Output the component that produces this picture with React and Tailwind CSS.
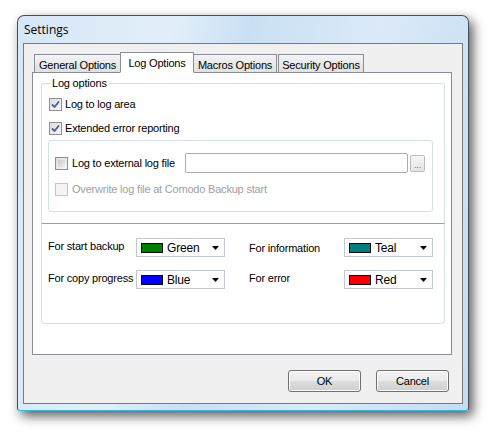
import React from 'react';

const font = { fontFamily: '"Liberation Sans", Arial, sans-serif' };

const Check = ({ checked, disabled }) => (
    <div className={`w-[13px] h-[13px] border flex items-center justify-center shrink-0 ${disabled ? 'border-[#c5c5c5] bg-[#f4f4f4]' : 'border-[#8e8f8f] bg-gradient-to-br from-[#dcdcdc] to-[#f8f8f8]'}`}>
        {checked && (
            <svg width="9" height="9" viewBox="0 0 9 9">
                <path d="M1 4.5 L3.5 7 L8 1.5" fill="none" stroke="#4a5b9a" strokeWidth="1.8" />
            </svg>
        )}
        {!checked && !disabled && <div className="w-[7px] h-[7px] bg-gradient-to-br from-[#cbcbcb] to-[#eeeeee]" />}
    </div>
);

const ColorCombo = ({ color, label }) => (
    <div className="w-[89px] h-[19px] border border-[#c3c8cc] bg-white flex items-center pl-[4px] pr-[5px]">
        <div className="w-[22px] h-[10px] border border-black" style={{ backgroundColor: color }} />
        <span className="ml-[4px] text-[12px] leading-[14px] text-black flex-1">{label}</span>
        <svg width="7" height="4" viewBox="0 0 7 4"><path d="M0 0 H7 L3.5 4 Z" fill="#000" /></svg>
    </div>
);

const Tab = ({ label, active, width }) => (
    <div
        className={`border border-[#898c95] flex justify-center text-black text-[11px] leading-[14px] whitespace-nowrap ${active ? 'h-[21px] bg-white border-b-white pt-[3px] -mx-[1px] z-10 relative' : 'h-[19px] mt-[2px] bg-gradient-to-b from-[#f3f3f3] to-[#e1e1e1] pt-[3px]'}`}
        style={{ width }}
    >
        {label}
    </div>
);

const Button = ({ label }) => (
    <div className="w-[73px] h-[22px] rounded-[3px] border border-[#707070] flex items-center justify-center text-[11px] text-black bg-[linear-gradient(to_bottom,#f2f2f2_0%,#ebebeb_50%,#dddddd_51%,#cfcfcf_100%)] shadow-[inset_0_0_0_1px_#fcfcfc]">
        {label}
    </div>
);

export default function App() {
    return (
        <div className="w-[491px] h-[433px] bg-white overflow-hidden pt-[15px] pl-[17px] tracking-[-0.2px]" style={font}>
            <div className="w-[452px] h-[396px] rounded-t-[7px] rounded-b-[3px] border border-[#4b4f55] border-b-[#2fb8e6] bg-[linear-gradient(100deg,#d6e7f7_0%,#e2eefa_30%,#c9e0f4_45%,#dbeaf8_70%,#c4ddf3_100%)] shadow-[4px_5px_12px_rgba(0,0,0,0.65)] flex flex-col">
                <div className="h-[27px] pl-[6px] pt-[6px] text-[12px] leading-[16px] text-black tracking-normal" style={{ fontFamily: '"Open Sans", "Liberation Sans", sans-serif' }}>Settings</div>
                <div className="mx-[5px] h-[361px] border border-[#7a7a7a] bg-[#f0f0f0] flex flex-col">
                    <div className="flex pl-[10px] pt-[8px] h-[29px] items-start">
                        <Tab label="General Options" width="87px" />
                        <Tab label="Log Options" width="74px" active />
                        <Tab label="Macros Options" width="84px" />
                        <div className="w-[1px]" />
                        <Tab label="Security Options" width="86px" />
                    </div>
                    <div className="ml-[8px] w-[420px] h-[283px] -mt-[1px] border border-[#898c95] bg-white pt-[10px] pl-[8px]">
                        {/* Log options group */}
                        <div className="relative w-[404px] h-[141px] border border-[#d5dfe5] rounded-t-[3px] border-b-[#a0a0a0] pt-[14px] pl-[7px]">
                            <div className="absolute -top-[8px] left-[8px] px-[2px] bg-white text-[11px] text-black leading-[14px]">Log options</div>
                            <div className="flex items-center gap-[3px] h-[13px]">
                                <Check checked />
                                <span className="text-[11px] leading-[13px] text-black">Log to log area</span>
                            </div>
                            <div className="flex items-center gap-[3px] h-[13px] mt-[11px]">
                                <Check checked />
                                <span className="text-[11px] leading-[13px] text-black">Extended error reporting</span>
                            </div>
                            <div className="mt-[5px] -ml-[1px] w-[385px] h-[72px] border border-[#d5dfe5] rounded-[3px] pl-[6px] pt-[12px]">
                                <div className="flex items-center h-[20px]">
                                    <Check />
                                    <span className="ml-[4px] text-[11px] leading-[13px] text-black w-[113px] whitespace-nowrap">Log to external log file</span>
                                    <div className="w-[223px] h-[20px] border border-[#abadb3] rounded-[2px] bg-white" />
                                    <div className="ml-[2px] w-[15px] h-[17px] border border-[#b9bcc1] rounded-[2px] bg-gradient-to-b from-[#f7f7f7] to-[#e4e4e4] text-[9px] text-[#6d6d6d] flex items-end justify-center leading-[12px]">...</div>
                                </div>
                                <div className="flex items-center gap-[4px] h-[13px] mt-[10px]">
                                    <Check disabled />
                                    <span className="text-[11px] leading-[13px] text-[#a0a0a0] whitespace-nowrap">Overwrite log file at Comodo Backup start</span>
                                </div>
                            </div>
                        </div>
                        {/* Colors group */}
                        <div className="w-[404px] h-[101px] -mt-[1px] border border-[#d5dfe5] border-t-[#a0a0a0] rounded-b-[4px] pl-[6px] pt-[14px] grid grid-cols-[88px_89px_119px_89px] gap-y-[13px] content-start">
                            <div className="text-[11px] text-black leading-[14px] pt-[1px] whitespace-nowrap">For start backup</div>
                            <ColorCombo color="#008000" label="Green" />
                            <div className="text-[11px] text-black leading-[14px] pt-[3px] pl-[24px] whitespace-nowrap">For information</div>
                            <ColorCombo color="#008080" label="Teal" />
                            <div className="text-[11px] text-black leading-[14px] pt-[1px] whitespace-nowrap">For copy progress</div>
                            <ColorCombo color="#0000ff" label="Blue" />
                            <div className="text-[11px] text-black leading-[14px] pt-[1px] pl-[24px] whitespace-nowrap">For error</div>
                            <ColorCombo color="#ff0000" label="Red" />
                        </div>
                    </div>
                    <div className="flex justify-end gap-[15px] pr-[13px] mt-[15px]">
                        <Button label="OK" />
                        <Button label="Cancel" />
                    </div>
                </div>
            </div>
        </div>
    );
}
